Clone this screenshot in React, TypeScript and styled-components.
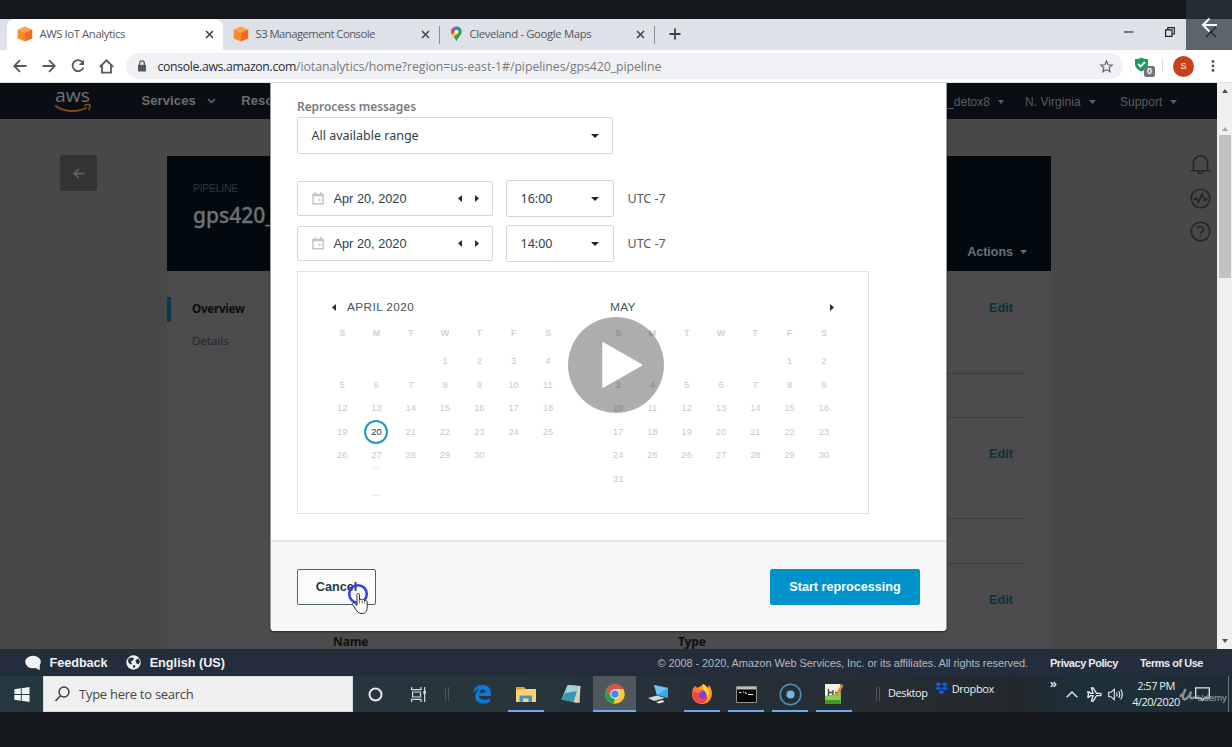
import React from 'react';
import styled, { createGlobalStyle, css } from 'styled-components';

const Global = createGlobalStyle`
  * { box-sizing: border-box; }
  html, body { margin: 0; background: #14171c; overflow: hidden; }
  svg { display: block; flex: none; overflow: visible; }
`;

const arial = '"Liberation Sans", Arial, sans-serif';
const ember = '"Noto Sans", sans-serif';
const segoe = '"Open Sans", "Noto Sans", sans-serif';

const Screen = styled.div`
  position: relative;
  width: 1232px;
  height: 747px;
  display: flex;
  flex-direction: column;
  background: #14171c;
  overflow: hidden;
  white-space: nowrap;
  font-family: ${arial};
`;

/* ---------- browser chrome ---------- */
const TabStrip = styled.div`
  margin-top: 19px;
  height: 31px;
  flex: none;
  display: flex;
  background: #dee1e7;
  padding-left: 7px;
`;
const Tab = styled.div<{ $active?: boolean; $width: number }>`
  width: ${p => p.$width}px;
  height: 31px;
  display: flex;
  align-items: center;
  padding: 0 9.5px 1px 10px;
  background: ${p => (p.$active ? '#fff' : 'transparent')};
  border-radius: 8px 8px 0 0;
`;
const TabTitle = styled.span<{ $ls: number }>`
  flex: 1;
  margin-left: 6.5px;
  font: 11.3px/16px ${segoe};
  letter-spacing: ${p => p.$ls}px;
  color: #55585c;
`;
const TabDivider = styled.i`
  width: 1px;
  height: 18px;
  margin-top: 7px;
  background: #8b8e93;
`;
const NewTab = styled.div`
  padding: 9px 0 0 14px;
`;
const WindowButtons = styled.div`
  display: flex;
  gap: 31px;
  margin-left: auto;
  padding: 8px 16px 0 0;
`;
const Toolbar = styled.div`
  height: 33px;
  flex: none;
  display: flex;
  align-items: center;
  background: #fff;
  border-bottom: 1px solid #dfe0e2;
`;
const NavButton = styled.div`
  width: 29px;
  display: flex;
  justify-content: center;
`;
const NavButtons = styled.div`
  display: flex;
  padding-left: 5px;
`;
const AddressBar = styled.div`
  width: 997px;
  height: 26px;
  margin-left: 5px;
  display: flex;
  align-items: center;
  padding: 0 10px 0 11px;
  border-radius: 13px;
  background: #f0f1f5;
`;
const Url = styled.span`
  flex: 1;
  margin-left: 10.5px;
  padding-top: 1px;
  font: 12.3px/18px ${segoe};
  letter-spacing: -0.06px;
  color: #77797d;
  b { font-weight: 400; color: #2c2e32; letter-spacing: -0.36px; }
`;
const Shield = styled.div`
  position: relative;
  margin-left: 11px;
  width: 22px;
  height: 20px;
`;
const ShieldCount = styled.span`
  position: absolute;
  left: 10px;
  top: 10px;
  width: 11px;
  height: 11px;
  border-radius: 2px;
  background: #73757d;
  color: #fff;
  font: bold 9px/11px ${arial};
  text-align: center;
`;
const ToolbarRule = styled.i`
  width: 1px;
  height: 14px;
  margin: 0 10px 0 6px;
  background: #dcdde0;
`;
const Avatar = styled.span`
  width: 21px;
  height: 21px;
  border-radius: 50%;
  background: #c8401a;
  color: #fff;
  font: 9px/21px ${arial};
  text-align: center;
`;

/* ---------- page behind the dialog ---------- */
const Viewport = styled.div`
  position: relative;
  height: 566px;
  flex: none;
  display: flex;
`;
const Page = styled.div`
  width: 1217px;
  height: 566px;
  background: #484848;
  overflow: hidden;
`;
const ConsoleNav = styled.div`
  height: 36px;
  display: flex;
  align-items: center;
  background: #0a0d13;
  padding-left: 54px;
  color: #6b6d70;
`;
const NavMenu = styled.span<{ $left: number }>`
  margin-left: ${p => p.$left}px;
  display: flex;
  align-items: center;
  font: bold 13px/16px ${arial};
  letter-spacing: 0.1px;
`;
const NavAccount = styled.span<{ $width: number }>`
  width: ${p => p.$width}px;
  display: flex;
  align-items: center;
  gap: 8px;
  font: 12px/16px ${arial};
  letter-spacing: 0.05px;
  color: #5b5d60;
`;
const NavRight = styled.div`
  display: flex;
  margin-left: auto;
  padding: 1px 0 0;
`;
const PageBody = styled.div`
  display: flex;
  padding: 37px 6px 0 60px;
`;
const BackButton = styled.div`
  width: 37px;
  height: 36px;
  margin-top: -1px;
  border-radius: 3px;
  background: #333;
  display: flex;
  align-items: center;
  justify-content: center;
`;
const Panel = styled.div`
  width: 884px;
  height: 493px;
  margin-left: 70px;
  background: #4d4b4d;
`;
const Hero = styled.div`
  height: 115px;
  display: flex;
  justify-content: space-between;
  align-items: flex-end;
  padding: 0 24px 11px 26px;
  background: #02090f;
`;
const HeroTitle = styled.div`
  align-self: flex-start;
  padding-top: 25px;
  small {
    display: block;
    font: 10.5px/14px ${arial};
    letter-spacing: -0.3px;
    color: #30363b;
  }
  strong {
    display: block;
    margin-top: 6px;
    font: 500 21px/28px ${ember};
    -webkit-text-stroke: 0.3px #6d7174;
    color: #6d7174;
  }
`;
const Actions = styled.span`
  display: flex;
  align-items: center;
  gap: 7px;
  font: bold 12.5px/16px ${arial};
  color: #6d7073;
`;
const PanelColumns = styled.div`
  display: flex;
`;
const SideTabs = styled.div`
  width: 166px;
  padding-top: 26px;
`;
const SideTab = styled.div<{ $active?: boolean }>`
  height: 25px;
  margin-bottom: 7px;
  padding-left: 21px;
  border-left: 4px solid ${p => (p.$active ? '#053a52' : 'transparent')};
  font: ${p => (p.$active ? 'bold' : 'normal')} 11.6px/23px ${ember};
  letter-spacing: ${p => (p.$active ? -0.25 : -0.1)}px;
  color: ${p => (p.$active ? '#0b0d0f' : '#262829')};
`;
const Sections = styled.div`
  width: 691px;
`;
const Section = styled.div<{ $height: number; $top?: number }>`
  height: ${p => p.$height}px;
  padding: ${p => p.$top ?? 27}px 11px 0 0;
  text-align: right;
  border-bottom: 1px solid #3c3b3d;
`;
const Edit = styled.span`
  display: block;
  font: bold 12.7px/16px ${arial};
  color: #07343d;
`;
const TableHead = styled.div`
  display: flex;
  margin-top: 25px;
  text-align: left;
  font: bold 12px/17px ${ember};
  letter-spacing: -0.1px;
  color: #0d0f11;
  span { width: 345px; flex: none; }
`;
const HelpRail = styled.div`
  margin-left: auto;
  display: flex;
  flex-direction: column;
  gap: 12.5px;
  margin-top: -2px;
`;
const Scrollbar = styled.div`
  width: 15px;
  background: #f0f0f0;
  display: flex;
  flex-direction: column;
  align-items: center;
`;
const Thumb = styled.i`
  width: 12px;
  height: 143px;
  margin: 4px 0 auto;
  background: #c2c2c2;
`;
const ScrollArrow = styled.i<{ $down?: boolean; $dim?: boolean; $gap: number }>`
  width: 0;
  height: 0;
  margin-top: ${p => p.$gap}px;
  border: 3.5px solid transparent;
  ${p => p.$down
    ? css`border-top: 4px solid #505050; border-bottom: 0; margin-bottom: 6px;`
    : css`border-bottom: 4px solid ${p.$dim ? '#a3a3a3' : '#505050'}; border-top: 0;`}
`;

/* ---------- dialog ---------- */
const Dialog = styled.div`
  position: absolute;
  left: 270px;
  top: 0;
  width: 677px;
  height: 548px;
  display: flex;
  flex-direction: column;
  background: #fff;
  border-left: 1px solid #9c9c9c;
  border-right: 1px solid #9c9c9c;
  border-radius: 0 0 4px 4px;
  overflow: hidden;
  box-shadow: 0 1px 2px rgba(0, 0, 0, 0.5);
`;
const DialogBody = styled.div`
  height: 457px;
  padding: 15px 0 0 26px;
`;
const FieldLabel = styled.div`
  height: 19px;
  font: 600 12px/17px ${ember};
  letter-spacing: -0.08px;
  color: #7b7b7b;
`;
const Field = styled.div<{ $width: number; $height: number; $padRight: number }>`
  width: ${p => p.$width}px;
  height: ${p => p.$height}px;
  display: flex;
  align-items: center;
  justify-content: space-between;
  padding: 0 ${p => p.$padRight}px 0 13.5px;
  border: 1px solid #d6d6d6;
  border-radius: 2px;
  font: 12.5px/18px ${ember};
  color: #2c4248;
`;
const DateRow = styled.div<{ $gap: number }>`
  display: flex;
  align-items: center;
  height: 37px;
  margin-top: ${p => p.$gap}px;
`;
const TimeField = styled(Field)`
  margin-left: 13px;
`;
const DateText = styled.span`
  flex: 1;
  margin-left: 10px;
  font: 12.75px/18px ${arial};
`;
const Steppers = styled.span`
  display: flex;
  gap: 13px;
`;
const Zone = styled.span`
  margin-left: 13.5px;
  font: 12.5px/18px ${ember};
  color: #565b5d;
`;
const Calendar = styled.div`
  width: 572px;
  height: 243px;
  margin-top: 9px;
  display: flex;
  gap: 36px;
  padding: 27px 27px 0;
  border: 1px solid #e1e1e3;
`;
const Month = styled.div`
  width: 240px;
`;
const MonthHead = styled.div<{ $left: number; $spread?: boolean }>`
  height: 16px;
  display: flex;
  align-items: center;
  justify-content: ${p => (p.$spread ? 'space-between' : 'flex-start')};
  gap: 11px;
  padding: 0 7px 0 ${p => p.$left}px;
  font: 11.8px/16px ${arial};
  letter-spacing: 0.4px;
  color: #44575b;
`;
const Weekdays = styled.div`
  display: grid;
  grid-template-columns: repeat(7, 34.3px);
  margin: 10px 0 9px;
  font: bold 9px/16px ${arial};
  text-align: center;
  color: #d2d2d2;
`;
const Days = styled.div`
  display: grid;
  grid-template-columns: repeat(7, 34.3px);
  grid-auto-rows: 23.5px;
  font: 9.3px/23.5px ${arial};
  text-align: center;
  color: #c9c9c9;
`;
const Today = styled.span`
  width: 24px;
  height: 24px;
  margin: -0.5px auto 0;
  border: 2px solid #2099bd;
  border-radius: 50%;
  line-height: 20px;
  color: #1b3036;
`;
const Dots = styled.div`
  margin-left: 34px;
  width: 34px;
  display: grid;
  justify-items: center;
  gap: 26px;
  i { width: 6px; height: 1px; border: solid #d8d8d8; border-width: 0 2px; }
`;
const DialogFooter = styled.div`
  flex: 1;
  display: flex;
  justify-content: space-between;
  align-items: center;
  padding: 0 26px;
  border-top: 2px solid #e6e6e8;
  background: #f7f6f8;
`;
const Button = styled.div<{ $primary?: boolean }>`
  width: ${p => (p.$primary ? 150 : 79)}px;
  height: 36px;
  border-radius: 2px;
  border: 1px solid ${p => (p.$primary ? '#0092cb' : '#4c6467')};
  background: ${p => (p.$primary ? '#0092cb' : '#fbfbfc')};
  color: ${p => (p.$primary ? '#fff' : '#1f3a44')};
  font: bold 12.6px/34px ${arial};
  text-align: center;
`;
const Pointer = styled.div`
  position: absolute;
  left: 348px;
  top: 500px;
`;
const PlayButton = styled.div`
  position: absolute;
  left: 568px;
  top: 317px;
`;
const PlayerBack = styled.div`
  position: absolute;
  left: 1186px;
  top: 0;
  width: 46px;
  height: 50px;
  background: rgba(41, 51, 62, 0.72);
  svg { margin: 16px 0 0 15px; }
`;

/* ---------- console footer ---------- */
const ConsoleFooter = styled.div`
  height: 27px;
  flex: none;
  display: flex;
  align-items: center;
  padding: 0 29px 0 25px;
  background: #232d3c;
  color: #f1f2f3;
  font: bold 12.7px/16px ${arial};
`;
const FooterLink = styled.span<{ $right: number; $ls?: number }>`
  margin: 0 ${p => p.$right}px 0 8.5px;
  letter-spacing: ${p => p.$ls ?? 0}px;
`;
const Legal = styled.span`
  margin-left: auto;
  display: flex;
  font-size: 11px;
  font-weight: 400;
  letter-spacing: -0.08px;
  color: #b3b8bd;
  b { color: #e8eaec; margin-left: 22px; letter-spacing: -0.48px; }
`;

/* ---------- taskbar ---------- */
const Taskbar = styled.div`
  position: relative;
  height: 36px;
  flex: none;
  display: flex;
  background: linear-gradient(90deg, #253740 0, #28363b 40%, #27313a 52%, #262c32 72%, #22282c 82%, #1d3039 88%, #1e2c34 100%);
  font-family: ${segoe};
  color: #eceeef;
`;
const Cell = styled.div<{ $width: number; $tile?: boolean; $open?: boolean }>`
  width: ${p => p.$width}px;
  height: 36px;
  display: flex;
  align-items: center;
  justify-content: center;
  background: ${p => (p.$tile ? '#50585c' : 'none')};
  box-shadow: ${p => (p.$open ? 'inset 0 -2px #6cabec' : 'none')};
  margin: 0 ${p => (p.$open && !p.$tile ? 4 : 0)}px;
`;
const SearchBox = styled.div`
  width: 310px;
  height: 36px;
  display: flex;
  align-items: center;
  gap: 9px;
  padding-left: 11px;
  background: #f0f0f0;
  border: 1px solid #d9dadb;
  font-size: 13px;
  letter-spacing: -0.27px;
  color: #464646;
`;
const Grip = styled.i<{ $left: number; $right: number }>`
  width: 4px;
  height: 14px;
  margin: 11px ${p => p.$right}px 0 ${p => p.$left}px;
  border: solid #4c565b;
  border-width: 0 1px;
`;
const TaskLabel = styled.span<{ $top: number; $left: number }>`
  margin-left: ${p => p.$left}px;
  margin-top: ${p => p.$top}px;
  display: flex;
  gap: 4px;
  height: 16px;
  font-size: 11px;
  line-height: 16px;
  letter-spacing: -0.4px;
`;
const Tray = styled.div`
  margin-left: auto;
  display: flex;
  align-items: center;
  padding-right: 3px;
`;
const Chevrons = styled.span`
  margin: -23px 4px 0 0;
  font-size: 13px;
  font-weight: 600;
  line-height: 14px;
`;
const TrayIcon = styled.div`
  width: 22px;
  display: flex;
  justify-content: center;
`;
const Clock = styled.div`
  width: 58px;
  text-align: center;
  font-size: 11px;
  line-height: 16px;
  letter-spacing: -0.5px;
`;
const ActionCenter = styled.div`
  margin-left: 10px;
  width: 34px;
  border-right: 1px solid #69757b;
  height: 36px;
  padding-top: 11px;
`;
const Watermark = styled.div`
  position: absolute;
  left: 1179px;
  top: 14px;
  display: flex;
  align-items: center;
  color: #8b9093;
  font: 600 9px/14px ${segoe};
  letter-spacing: -0.25px;
`;

/* ---------- icons ---------- */
const Caret = ({ color = '#222', w = 8, h = 4 }: { color?: string; w?: number; h?: number }) => (
  <svg width={w} height={h}><path d={`M0 0H${w}L${w / 2} ${h}Z`} fill={color} /></svg>
);
const Side = ({ right }: { right?: boolean }) => (
  <svg width="4" height="7"><path d={right ? 'M0 0V7L4 3.5Z' : 'M4 0V7L0 3.5Z'} fill="#16333c" /></svg>
);
const Cube = () => (
  <svg width="16" height="16" viewBox="0 0 16 16">
    <path d="M8 .5L15.3 3.5 8 6.5.7 3.5Z" fill="#fea443" />
    <path d="M.7 3.5L8 6.5V15.5L.7 12.6Z" fill="#fd8a2e" />
    <path d="M15.3 3.5L8 6.5V15.5L15.3 12.6Z" fill="#f16a22" />
  </svg>
);
const MapPin = () => (
  <svg width="13" height="16" viewBox="0 0 13 16">
    <clipPath id="pin"><path d="M6.5.5a5.3 5.3 0 0 1 5.3 5.3C11.8 9.5 8 11 6.5 15.5 5 11 1.2 9.5 1.2 5.8A5.3 5.3 0 0 1 6.5.5Z" /></clipPath>
    <g clipPath="url(#pin)">
      <path d="M0 0H13V16H0Z" fill="#34a350" />
      <path d="M0 0H13L5 7 0 5Z" fill="#3f7fe8" />
      <path d="M0 3L3 2 6 6 2 10 0 8Z" fill="#e5453a" />
      <path d="M1 9L7 4 8 7 3 12Z" fill="#fbc02d" />
    </g>
    <circle cx="6.5" cy="5.8" r="1.9" fill="#fff" />
  </svg>
);
const Close = () => (
  <svg width="9" height="9" viewBox="0 0 9 9" stroke="#45474b" strokeWidth="1.6"><path d="M1 1L8 8M8 1L1 8" /></svg>
);
const CalendarIcon = () => (
  <svg width="12" height="13" viewBox="0 0 13 14" fill="none" stroke="#c4c4c4" strokeWidth="1.6">
    <path d="M1 2.7H12V12.8H1Z M3.5 0V3 M9.5 0V3" /><path d="M1 3.5H12" strokeWidth="2" /><path d="M7 8.5H9.3" strokeWidth="2.3" />
  </svg>
);

const strokes = { fill: 'none', stroke: '#56595d', strokeWidth: 1.8 } as const;
const rail = { fill: 'none', stroke: '#252525', strokeWidth: 1.6 } as const;

const week = ['S', 'M', 'T', 'W', 'T', 'F', 'S'];
const range = (offset: number, n: number) => [
  ...Array.from({ length: offset }, () => 0),
  ...Array.from({ length: n }, (_, i) => i + 1),
];

const MonthGrid = ({ offset, count, today }: { offset: number; count: number; today?: number }) => (
  <>
    <Weekdays>{week.map((d, i) => <span key={i}>{d}</span>)}</Weekdays>
    <Days>
      {range(offset, count).map((d, i) =>
        d && d === today ? <Today key={i}>{d}</Today> : <span key={i}>{d || ''}</span>)}
    </Days>
  </>
);

const DateLine = ({ time, gap }: { time: string; gap: number }) => (
  <DateRow $gap={gap}>
    <Field $width={196} $height={35} $padRight={13}>
      <CalendarIcon />
      <DateText>Apr 20, 2020</DateText>
      <Steppers><Side /><Side right /></Steppers>
    </Field>
    <TimeField $width={108} $height={37} $padRight={14}>
      {time}<Caret />
    </TimeField>
    <Zone>UTC -7</Zone>
  </DateRow>
);

export default function App() {
  return (
    <Screen>
      <Global />
      <TabStrip>
        <Tab $active $width={216}><Cube /><TabTitle $ls={-0.4}>AWS IoT Analytics</TabTitle><Close /></Tab>
        <Tab $width={216}><Cube /><TabTitle $ls={-0.54}>S3 Management Console</TabTitle><Close /></Tab>
        <TabDivider />
        <Tab $width={214}><MapPin /><TabTitle $ls={-0.34}>Cleveland - Google Maps</TabTitle><Close /></Tab>
        <TabDivider />
        <NewTab>
          <svg width="12" height="12" stroke="#3f4145" strokeWidth="1.8"><path d="M6 .5V11.5M.5 6H11.5" /></svg>
        </NewTab>
        <WindowButtons>
          <svg width="10" height="10" stroke="#333" strokeWidth="1.2"><path d="M0 5H9.5" /></svg>
          <svg width="10" height="10" fill="none" stroke="#222" strokeWidth="1.2"><path d="M.6 2.8H7V9.3H.6Z M2.8 2.8V.7H9.3V7H7" /></svg>
          <svg width="10" height="10" stroke="#000" strokeWidth="1.2"><path d="M0 0L10 10M10 0L0 10" /></svg>
        </WindowButtons>
      </TabStrip>
      <Toolbar>
        <NavButtons>
          <NavButton><svg width="14" height="14" {...strokes}><path d="M13.5 7H1.5M7 1.2L1.2 7 7 12.8" /></svg></NavButton>
          <NavButton><svg width="14" height="14" {...strokes}><path d="M.5 7H12.5M7 1.2L12.8 7 7 12.8" /></svg></NavButton>
          <NavButton><svg width="14" height="14" {...strokes}><path d="M11.5 3.3A5.5 5.5 0 1 0 12.3 8.5" /><path d="M13 .8V6H7.8Z" fill="#56595d" stroke="none" /></svg></NavButton>
          <NavButton><svg width="15" height="15" {...strokes}><path d="M.8 7.8L7.5 1.3 14.2 7.8M3 6.5V13.7H12V6.5" /></svg></NavButton>
        </NavButtons>
        <AddressBar>
          <svg width="10" height="12" viewBox="0 0 10 12"><path d="M1 4.8H9V11.5H1Z" fill="#55585c" /><path d="M2.7 5V3.2a2.3 2.3 0 0 1 4.6 0V5" fill="none" stroke="#55585c" strokeWidth="1.3" /></svg>
          <Url><b>console.aws.amazon.com</b>/iotanalytics/home?region=us-east-1#/pipelines/gps420_pipeline</Url>
          <svg width="13" height="13" viewBox="0 0 13 13" fill="none" stroke="#5f6368" strokeWidth="1.2"><path d="M6.5 1L8.1 4.8 12.2 5.1 9.1 7.8 10.1 11.8 6.5 9.6 2.9 11.8 3.9 7.8.8 5.1 4.9 4.8Z" /></svg>
        </AddressBar>
        <Shield>
          <svg width="15" height="17" viewBox="0 0 15 17"><path d="M1 3C3.5 3 5.5 2.5 7.5 1.5 9.5 2.5 11.5 3 14 3V8C14 11.5 11 14 7.5 15.5 4 14 1 11.5 1 8Z" fill="#159e5d" /><path d="M4 8L6.5 10.5 11 6" fill="none" stroke="#fff" strokeWidth="1.8" /></svg>
          <ShieldCount>0</ShieldCount>
        </Shield>
        <ToolbarRule />
        <Avatar>S</Avatar>
        <svg width="4" height="14" style={{ marginLeft: 17 }} fill="#55585c"><circle cx="2" cy="2.5" r="1.4" /><circle cx="2" cy="7" r="1.4" /><circle cx="2" cy="11.5" r="1.4" /></svg>
      </Toolbar>

      <Viewport>
        <Page>
          <ConsoleNav>
            <svg width="38" height="24" viewBox="0 0 38 24">
              <text x="1" y="13" fontFamily="Open Sans, sans-serif" fontSize="18.5" textLength="35" lengthAdjust="spacingAndGlyphs" fill="#707376">aws</text>
              <path d="M1 16.5C10 23.5 24 23.5 33 18.5" fill="none" stroke="#7c4f10" strokeWidth="2" />
              <path d="M30 16.5C33 15.5 35.5 15.5 36 16 36.5 17 35.5 19.5 34.5 21" fill="none" stroke="#7c4f10" strokeWidth="1.5" />
            </svg>
            <NavMenu $left={49.5}>Services<svg width="9" height="6" style={{ marginLeft: 11 }} fill="none" stroke="#6b6d70" strokeWidth="1.4"><path d="M1 1L4.5 4.5 8 1" /></svg></NavMenu>
            <NavMenu $left={25.5}>Reso</NavMenu>
            <NavRight>
              <NavAccount $width={78}>_detox8 <Caret color="#5b5d60" w={6} /></NavAccount>
              <NavAccount $width={95}>N. Virginia <Caret color="#5b5d60" w={7} /></NavAccount>
              <NavAccount $width={97}>Support <Caret color="#5b5d60" w={7} /></NavAccount>
            </NavRight>
          </ConsoleNav>
          <PageBody>
            <BackButton><svg width="12" height="11" fill="none" stroke="#676767" strokeWidth="1.5"><path d="M11.5 5.5H1.5M5.8 1L1.2 5.5 5.8 10" /></svg></BackButton>
            <Panel>
              <Hero>
                <HeroTitle><small>PIPELINE</small><strong>gps420_pipeline</strong></HeroTitle>
                <Actions>Actions <Caret color="#6d7073" w={7} /></Actions>
              </Hero>
              <PanelColumns>
                <SideTabs>
                  <SideTab $active>Overview</SideTab>
                  <SideTab>Details</SideTab>
                </SideTabs>
                <Sections>
                  <Section $height={103} $top={29}><Edit>Edit</Edit></Section>
                  <Section $height={44} />
                  <Section $height={101} $top={28}><Edit>Edit</Edit></Section>
                  <Section $height={45} />
                  <Section $height={90} $top={28}><Edit>Edit</Edit><TableHead><span>Name</span><span>Type</span></TableHead></Section>
                </Sections>
              </PanelColumns>
            </Panel>
            <HelpRail>
              <svg width="21" height="21" {...rail}><path d="M.8 16.8H20.2M3.5 16.5V9a7 7 0 0 1 14 0V16.5M8 17.5a2.5 2 0 0 0 5 0" /></svg>
              <svg width="21" height="21" {...rail}><circle cx="10.5" cy="10.5" r="9.3" /><path d="M3.5 12L6.5 10 8.5 14.5 12 6 14.5 12.5 17.5 10.5" /></svg>
              <svg width="21" height="21" {...rail}><circle cx="10.5" cy="10.5" r="9.3" /><path d="M7.5 8.3a3 2.8 0 1 1 4.3 2.5C10.8 11.4 10.5 11.8 10.5 13M10.5 14.5V16" /></svg>
            </HelpRail>
          </PageBody>
        </Page>
        <Scrollbar>
          <ScrollArrow $gap={6} />
          <ScrollArrow $gap={34} $dim />
          <Thumb />
          <ScrollArrow $gap={0} $down />
        </Scrollbar>

        <Dialog>
          <DialogBody>
            <FieldLabel>Reprocess messages</FieldLabel>
            <Field $width={316} $height={37} $padRight={13}>All available range<Caret /></Field>
            <DateLine time="16:00" gap={26} />
            <DateLine time="14:00" gap={8} />
            <Calendar>
              <Month>
                <MonthHead $left={7}><Side />APRIL 2020</MonthHead>
                <MonthGrid offset={3} count={30} today={20} />
                <Dots><i /><i /></Dots>
              </Month>
              <Month>
                <MonthHead $left={9} $spread>MAY<Side right /></MonthHead>
                <MonthGrid offset={5} count={31} />
              </Month>
            </Calendar>
          </DialogBody>
          <DialogFooter>
            <Button>Cancel</Button>
            <Button $primary>Start reprocessing</Button>
          </DialogFooter>
        </Dialog>
        <Pointer>
          <svg width="24" height="32" viewBox="0 0 24 32">
            <circle cx="10" cy="11" r="8.8" fill="none" stroke="#3a3fe0" strokeWidth="2.6" />
            <path d="M9 11.5C9 10 11.5 10 11.5 11.5V17C12 15.8 14 16 14.2 17 15 16.2 16.5 16.5 16.7 17.7 17.5 17 19.2 17.5 19.2 19V24C19.2 28 17.5 30.5 14 30.5 10.5 30.5 9.5 29 7.5 26L4.5 21.5C4 20 5.5 19.5 6.5 20.3L9 22.5Z" fill="#fff" stroke="#333" />
            <path d="M11.6 17V20.5M14.2 17.5V20.5M16.7 18V20.5" stroke="#444" strokeWidth=".8" />
          </svg>
        </Pointer>
      </Viewport>

      <ConsoleFooter>
        <svg width="16" height="16" viewBox="0 0 16 16"><ellipse cx="8" cy="7" rx="7.8" ry="6.3" fill="#f1f2f3" /><path d="M9 12L15 10 14.5 15.3Z" fill="#f1f2f3" /></svg>
        <FooterLink $right={18.5} $ls={-0.05}>Feedback</FooterLink>
        <svg width="15" height="15" viewBox="0 0 15 15"><circle cx="7.5" cy="7.5" r="7.2" fill="#f1f2f3" /><path d="M2.5 3.5L5 2.5 8 3 7 5.5 5 6.5 6 9 4.5 9.5 2 7Z M9.5 5L12.5 3.5 14 7 12.5 9.5 10 8Z M7 10L9.5 10.5 8.5 13 7 12.5Z" fill="#27303e" /></svg>
        <FooterLink $right={0}>English (US)</FooterLink>
        <Legal>© 2008 - 2020, Amazon Web Services, Inc. or its affiliates. All rights reserved.<b>Privacy Policy</b><b>Terms of Use</b></Legal>
      </ConsoleFooter>

      <Taskbar>
        <Cell $width={43}>
          <svg width="16" height="15" viewBox="0 0 16 15" fill="#f5f7f7"><path d="M.3 2.2L6.8 1.3V7H.3ZM7.7 1.2L15.5.1V7H7.7ZM.3 8H6.8V13.7L.3 12.8ZM7.7 8H15.5V14.9L7.7 13.8Z" /></svg>
        </Cell>
        <SearchBox>
          <svg width="15" height="16" fill="none" stroke="#3d3d3d" strokeWidth="1.4"><circle cx="9" cy="6" r="5" /><path d="M5.5 9.7L.5 15" /></svg>
          Type here to search
        </SearchBox>
        <Cell $width={44}><svg width="15" height="15" fill="none" stroke="#e6eaec" strokeWidth="2"><circle cx="7.5" cy="7.5" r="6" /></svg></Cell>
        <Cell $width={44}>
          <svg width="16" height="15" fill="none" stroke="#d5dadc" strokeWidth="1.2"><path d="M.6 0V2.6H10V0M.6 15V12.4H10V15M1.6 5H9.5V10H1.6Z M13.6 0V15" /><path d="M12.3 5.5H15" strokeWidth="3" /></svg>
        </Cell>
        <Grip $left={4} $right={10} />
        <Cell $width={45}>
          <svg width="20" height="20" viewBox="0 0 20 20"><path d="M1 9C2 3.5 6 .8 10.5.8 15.8.8 19 4.5 19 9.5V12H7C7.2 14.5 9.5 15.8 12 15.8 14.3 15.8 16.2 15.2 18 14.2V18C16 19.1 13.8 19.6 11.3 19.6 6.3 19.6 3.2 16.5 3.2 12.3 3.2 9.3 4.7 6.9 7.2 5.5 4.5 5.8 2.5 7 1 9ZM7.2 8.7H13.4C13.4 6.5 12.3 5.4 10.5 5.4 8.8 5.4 7.5 6.7 7.2 8.7Z" fill="#0b78d7" /></svg>
        </Cell>
        <Cell $width={36} $open>
          <svg width="20" height="17" viewBox="0 0 20 17"><path d="M0 1H8L9.5 3H20V16H0Z" fill="#fad472" /><path d="M0 1H8L9 3.5H0Z" fill="#dda02e" /><path d="M3.5 16V9.5H16V16H12.5V12.5H7V16Z" fill="#4a90c8" /></svg>
        </Cell>
        <Cell $width={45}>
          <svg width="20" height="20" viewBox="0 0 20 20"><path d="M7 1L19.5 2 18.5 19 13 18.5Z" fill="#d8d2bc" /><path d="M6.5 1L17.5 2 12.5 18 .5 15.5Z" fill="#9fd3df" /><path d="M4 9L16 7 12.5 18 .5 15.5Z" fill="#3c95ad" /></svg>
        </Cell>
        <Cell $width={43} $tile $open>
          <svg width="20" height="20" viewBox="0 0 20 20"><circle cx="10" cy="10" r="9.8" fill="#fac933" /><path d="M10 .2A9.8 9.8 0 0 1 18.5 5.1H10L5.7 12.4 1.5 5.1A9.8 9.8 0 0 1 10 .2Z" fill="#dc5145" /><path d="M1.5 5.1L5.8 12.5 10 14.8 8.5 19.7A9.8 9.8 0 0 1 1.5 5.1Z" fill="#27a055" /><circle cx="10" cy="10" r="4.7" fill="#fff" /><circle cx="10" cy="10" r="3.8" fill="#4587ee" /></svg>
        </Cell>
        <Cell $width={44}>
          <svg width="21" height="20" viewBox="0 0 21 20"><path d="M6 1L20 4V14L9 11Z" fill="#3ba6e6" /><path d="M6 1L20 4 9 11Z" fill="#6cc4f5" /><path d="M0 14L9 11.5 17 14 6 17Z" fill="#d3d8dc" /><path d="M8 18L15 16 16 18 11 19.5Z" fill="#eef0f1" /></svg>
        </Cell>
        <Cell $width={36} $open>
          <svg width="22" height="22" viewBox="0 0 22 22"><path d="M2 6L4 3 6 5C9 3.5 11 3 12 1 15 2 15 4 17 5 18 3 17 3 18 2 21 6 21.5 10 20.5 14 19 18.5 15 21 11 21 5.5 21 1 17 1 11.5 1 9 1.3 7.5 2 6Z" fill="#fb9a25" /><path d="M1.2 9C3 7 5 7.5 7 8.5L10 9 7 12C9 16 14 16 16 12 17.5 16 14 20.5 10.5 20.5 5 20.5 1 16.5 1.2 9Z" fill="#f4404f" /><circle cx="11.5" cy="11.5" r="4" fill="#7543d9" /><path d="M2 6L4 3 7 6 11 7 9 10 5 10Z" fill="#fe7138" /><path d="M12 1C15 2 15 4 17 5 19 9 18 13 16 15 17 10 13 8 12 6Z" fill="#ffd044" /></svg>
        </Cell>
        <Cell $width={36} $open>
          <svg width="21" height="17" viewBox="0 0 21 17"><path d="M.5.5H20.5V16.5H.5Z" fill="#050505" stroke="#8b9295" /><path d="M1 1H20V3.5H1Z" fill="#b8bcbe" /><path d="M3 6.5H5.5M7 6H8M9 6L10.5 8M12 8.5H17" stroke="#eee" strokeWidth="1.2" /></svg>
        </Cell>
        <Cell $width={36} $open>
          <svg width="23" height="23"><circle cx="11.5" cy="11.5" r="10.3" fill="none" stroke="#4f8fb4" strokeWidth="1.6" /><circle cx="11.5" cy="11.5" r="4" fill="#6bb9ea" /></svg>
        </Cell>
        <Cell $width={36} $open>
          <svg width="20" height="22" viewBox="0 0 20 22"><path d="M1 1H16.5V21H1Z" fill="#eef3e4" /><path d="M1 13L16.5 10V21H1Z" fill="#8ccf4c" /><path d="M1 17H16.5V21H1Z" fill="#3f9a28" /><path d="M4.5 6V13M4.5 9.5H9M9 7V12M11 9.5H13" stroke="#444" strokeWidth="1.3" /><path d="M18.5 2L12 13" stroke="#e08a25" strokeWidth="2.5" /></svg>
        </Cell>
        <Grip $left={20} $right={0} />
        <TaskLabel $top={9} $left={8}>Desktop</TaskLabel>
        <TaskLabel $top={5} $left={7}>
          <svg width="13" height="13" viewBox="0 0 13 13" fill="#0a62e8"><path d="M3.3.3L6.5 2.3 3.3 4.3.1 2.3ZM9.7.3L12.9 2.3 9.7 4.3 6.5 2.3ZM3.3 4.3L6.5 6.3 3.3 8.3.1 6.3ZM9.7 4.3L12.9 6.3 9.7 8.3 6.5 6.3ZM6.5 8L9.7 10 6.5 12.5 3.3 10Z" transform="translate(0 1)" /></svg>
          Dropbox
        </TaskLabel>
        <Tray>
          <Chevrons>»</Chevrons>
          <TrayIcon><svg width="12" height="7" fill="none" stroke="#eceeef" strokeWidth="1.3"><path d="M.7 6.3L6 1 11.3 6.3" /></svg></TrayIcon>
          <TrayIcon><svg width="15" height="15" viewBox="0 0 15 15" fill="none" stroke="#eceeef" strokeWidth="1.3"><path d="M.8 5H2L3.5 6.3H6L4.5 1H6.2L9.5 6.3H13C14.6 6.3 14.6 8.7 13 8.7H9.5L6.2 14H4.5L6 8.7H3.5L2 10H.8L1.5 7.5Z" /></svg></TrayIcon>
          <TrayIcon><svg width="16" height="13" viewBox="0 0 16 13" fill="none" stroke="#eceeef" strokeWidth="1.1"><path d="M.7 4.3H3L6.3 1.2V11.8L3 8.7H.7ZM8.5 4.5Q9.7 6.5 8.5 8.5M10.7 3Q12.8 6.5 10.7 10M12.8 1.5Q15.8 6.5 12.8 11.5" /></svg></TrayIcon>
          <Clock>2:57 PM<br />4/20/2020</Clock>
          <ActionCenter><svg width="15" height="15" fill="none" stroke="#e3e6e8" strokeWidth="1.3"><path d="M.7.8H14.3V11H9.5L7.5 13.5 5.5 11H.7Z" /></svg></ActionCenter>
        </Tray>
        <Watermark>
          <svg width="18" height="15" fill="none" stroke="#8b9093" strokeWidth="2.3" strokeLinecap="round"><path d="M1.5 9C4 7.5 6 4 6.5 2 4 7 2.5 12 5.5 12.5 8 12.5 11 8 12 4.5 10.5 9 10.5 13 15 10.5" transform="translate(0 -3)" /></svg>
          Udemy
        </Watermark>
      </Taskbar>
      <PlayButton>
        <svg width="96" height="96"><circle cx="48" cy="48" r="48" fill="#000" fillOpacity=".32" /><path d="M35 26L73.5 48 35 70Z" fill="#fff" stroke="#fff" strokeWidth="1.5" strokeLinejoin="round" /></svg>
      </PlayButton>
      <PlayerBack>
        <svg width="17" height="18" fill="none" stroke="#fff" strokeWidth="2.2"><path d="M16 9H2.5M8.5 2.5L2 9 8.5 15.5" /></svg>
      </PlayerBack>
    </Screen>
  );
}
